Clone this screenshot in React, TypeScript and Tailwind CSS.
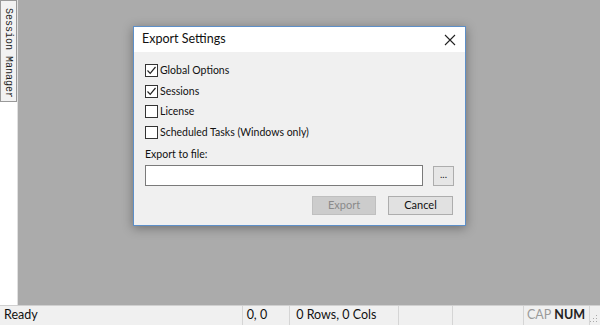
import React from "react";

const font = { fontFamily: 'Lato, "Noto Sans", sans-serif' };

function Check({ checked, label }: { checked: boolean; label: string }) {
  return (
    <div className="flex items-center h-[13px] gap-[2px]">
      <div className="w-[13px] h-[13px] border border-[#333] bg-white flex items-center justify-center">
        {checked && (
          <svg width="11" height="11" viewBox="0 0 11 11">
            <path d="M1.5 5.5 L4.2 8.3 L9.5 2" stroke="#222" strokeWidth="1.2" fill="none" />
          </svg>
        )}
      </div>
      <span className="text-[10.5px] text-[#111] leading-none">{label}</span>
    </div>
  );
}

export default function App() {
  return (
    <div className="w-[600px] h-[325px] flex flex-col bg-[#ababab] overflow-hidden" style={font}>
      <div className="flex-1 flex min-h-0">
        <div className="w-[18px] bg-white flex flex-col border-r border-[#e0e0e0]">
          <div className="h-[102px] border border-[#999] bg-[#f2f2f2] flex items-center justify-center pt-[4px]">
            <span
              className="text-[10px] text-[#222] whitespace-nowrap"
              style={{ writingMode: "vertical-rl", fontFamily: '"Liberation Mono", monospace' }}
            >
              Session Manager
            </span>
          </div>
        </div>
        <div className="flex-1 relative">
          <div className="absolute left-[115px] top-[26px] w-[333px] h-[200px] bg-[#f0f0f0] border border-[#5d8fc8] shadow-[0_2px_10px_rgba(0,0,0,0.35)] flex flex-col">
            <div className="h-[25px] bg-white flex items-center justify-between pl-[8px] pr-[8px]">
              <span className="text-[12.5px] text-[#111]">Export Settings</span>
              <svg width="12" height="12" viewBox="0 0 12 12" className="mr-[1px]">
                <path d="M1 1 L11 11 M11 1 L1 11" stroke="#222" strokeWidth="1.1" />
              </svg>
            </div>
            <div className="flex flex-col pl-[11px] pr-[11px] pt-[12px]">
              <div className="flex flex-col gap-[7.5px]">
                <Check checked label="Global Options" />
                <Check checked label="Sessions" />
                <Check checked={false} label="License" />
                <Check checked={false} label="Scheduled Tasks (Windows only)" />
              </div>
              <div className="text-[10.5px] text-[#111] mt-[10px] leading-none">Export to file:</div>
              <div className="flex items-center mt-[6px]">
                <div className="w-[279px] h-[21px] bg-white border border-[#7a7a7a]" />
                <div className="ml-[10px] w-[21px] h-[20px] bg-[#e6e6e6] border border-[#adadad] flex items-center justify-center text-[10px] text-[#222] leading-none pb-[4px]">
                  ...
                </div>
              </div>
              <div className="flex justify-end gap-[12px] mt-[10px] mr-[1px]">
                <div className="w-[64px] h-[19px] bg-[#cccccc] border border-[#bfbfbf] flex items-center justify-center text-[11px] text-[#8a8a8a]">
                  Export
                </div>
                <div className="w-[65px] h-[19px] bg-[#e1e1e1] border border-[#adadad] flex items-center justify-center text-[11px] text-[#111]">
                  Cancel
                </div>
              </div>
            </div>
          </div>
        </div>
      </div>
      <div className="h-[20px] bg-[#f0f0f0] border-t border-[#d0d0d0] flex items-center text-[12.5px] text-[#111] leading-none">
        <div className="w-[244px] pl-[4px]">Ready</div>
        <div className="w-[48px] h-full border-l border-[#d5d5d5] pl-[4px] flex items-center">0, 0</div>
        <div className="w-[110px] h-full border-l border-[#d5d5d5] pl-[6px] flex items-center">0 Rows, 0 Cols</div>
        <div className="w-[54px] h-full border-l border-[#d5d5d5]" />
        <div className="w-[72px] h-full border-l border-[#d5d5d5]" />
        <div className="h-full border-l border-[#d5d5d5] pl-[3px] flex items-center text-[#9a9a9a]">CAP</div>
        <div className="h-full pl-[3px] pr-[4px] flex items-center font-bold text-[#222]">NUM</div>
        <div className="flex-1 h-full border-l border-[#d5d5d5] flex items-end justify-end pr-[2px] pb-[2px]">
          <svg width="8" height="8" viewBox="0 0 8 8">
            <rect x="6" y="0" width="1" height="1" fill="#aaa" />
            <rect x="3" y="3" width="1" height="1" fill="#aaa" />
            <rect x="6" y="3" width="1" height="1" fill="#aaa" />
            <rect x="0" y="6" width="1" height="1" fill="#aaa" />
            <rect x="3" y="6" width="1" height="1" fill="#aaa" />
            <rect x="6" y="6" width="1" height="1" fill="#aaa" />
          </svg>
        </div>
      </div>
    </div>
  );
}
